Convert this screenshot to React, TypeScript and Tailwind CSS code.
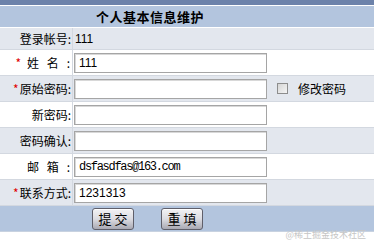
import React from "react";

const cjk = { fontFamily: '"SimSun", "Noto Sans CJK SC", sans-serif' };

type Row = {
  star?: "tight" | "loose";
  label: React.ReactNode;
  content: React.ReactNode;
  gray: boolean;
};

function Input({ value, mono }: { value?: string; mono?: boolean }) {
  return (
    <div className="h-[20px] w-[193px] border border-[#a5a5a5] bg-white shadow-[inset_1px_1px_0_#d8d8d8] flex items-center pl-[4px]">
      <span
        className={
          mono
            ? "text-[12px] tracking-[-1.3px] text-black"
            : "text-[12px] text-black"
        }
        style={{
          fontFamily: mono
            ? '"Liberation Mono", monospace'
            : '"Liberation Sans", Arial, sans-serif',
        }}
      >
        {value}
      </span>
    </div>
  );
}

function Spread({ a, b }: { a: string; b: string }) {
  return (
    <span className="flex w-[43px] justify-between mr-[1px]">
      <span>{a}</span>
      <span>{b}</span>
      <span>:</span>
    </span>
  );
}

const rows: Row[] = [
  {
    label: "登录帐号:",
    content: (
      <span className="text-[12px] pl-[1px]" style={{ fontFamily: '"Liberation Sans", Arial, sans-serif' }}>
        111
      </span>
    ),
    gray: true,
  },
  {
    star: "loose",
    label: <Spread a="姓" b="名" />,
    content: <Input value="111" />,
    gray: false,
  },
  {
    star: "tight",
    label: "原始密码:",
    content: (
      <div className="flex items-center">
        <Input />
        <div className="ml-[10px] h-[11px] w-[11px] border border-[#8d8d8d] bg-gradient-to-br from-[#d6d6d6] to-[#f4f4f4]" />
        <span className="ml-[10px] text-[12px] text-black">修改密码</span>
      </div>
    ),
    gray: true,
  },
  { label: "新密码:", content: <Input />, gray: false },
  { label: "密码确认:", content: <Input />, gray: true },
  {
    label: <Spread a="邮" b="箱" />,
    content: <Input value="dsfasdfas@163.com" mono />,
    gray: false,
  },
  { star: "tight", label: "联系方式:", content: <Input value="1231313" />, gray: true },
];

function Btn({ children }: { children: React.ReactNode }) {
  return (
    <button className="h-[22px] w-[42px] rounded-[3px] border border-[#5f5f6a] bg-gradient-to-b from-[#f2f2f4] via-[#dcdce2] to-[#a9a9b3] text-[13px] text-black tracking-[3px] pl-[3px] shadow-[inset_0_1px_0_#fff]">
      {children}
    </button>
  );
}

export default function App() {
  return (
    <div className="w-[374px] h-[249px] bg-white relative overflow-hidden" style={cjk}>
      <div className="h-[5px] bg-[#6c82aa]" />
      <div className="h-px bg-white" />
      <div className="h-[22px] bg-[#b3c5de] flex items-center pl-[96px] border-b border-white">
        <span className="text-[13px] font-bold text-black tracking-[0.5px]">个人基本信息维护</span>
      </div>
      {rows.map((r, i) => (
        <div
          key={i}
          className={
            (r.gray ? "bg-[#e3e7ee] " : "bg-white ") +
            (i === 0 ? "h-[22px] " : "h-[26px] ") +
            "flex border-b border-[#d3d8e0]"
          }
        >
          <div className="w-[73px] shrink-0 border-r border-[#d3d8e0] flex items-center justify-end pr-[1px] text-[12px] text-black">
            {r.star === "tight" && <span className="text-[#e00000] mr-px text-[12px]">*</span>}
            {r.star === "loose" && <span className="text-[#e00000] mr-[6px] text-[12px]">*</span>}
            {r.label}
          </div>
          <div className="flex-1 flex items-center pl-[1px]">{r.content}</div>
        </div>
      ))}
      <div className="h-[26px] bg-[#b3c5de] flex items-center pl-[92px] gap-[27px] border-b border-[#c8d2e0]">
        <Btn>提交</Btn>
        <Btn>重填</Btn>
      </div>
      <div className="absolute right-[8px] bottom-[8px] text-[9px] text-[#c6c6c6]">@稀土掘金技术社区</div>
    </div>
  );
}
